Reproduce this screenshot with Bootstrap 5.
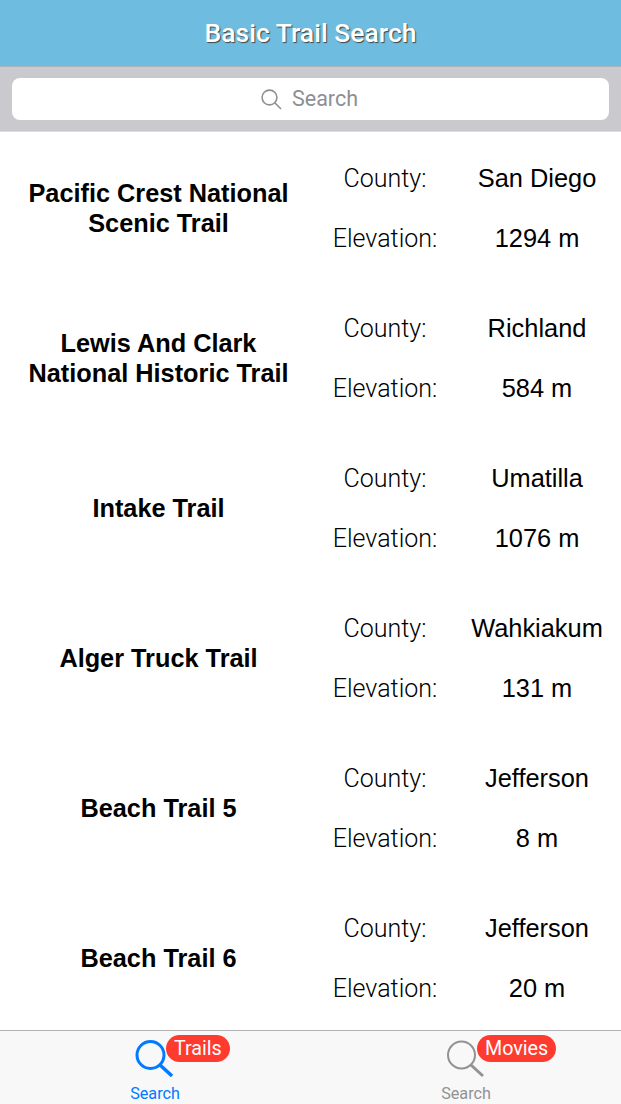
<!DOCTYPE html>
<html lang="en">
<head>
  <meta charset="UTF-8">
  <meta name="viewport" content="width=device-width, initial-scale=1.0">
  <title>Basic Trail Search</title>
  <link href="https://cdn.jsdelivr.net/npm/bootstrap@5.3.0/dist/css/bootstrap.min.css" rel="stylesheet">
  <style>
    html, body {
      height: 100%;
      background: #fff;
    }
    body {
      font-family: "Liberation Sans", Arial, sans-serif;
      color: #000;
      overflow: hidden;
    }
    .app-screen {
      height: 1104px;
    }
    .title-bar {
      height: 67px;
      background: #6ebde0;
      border-bottom: 1px solid #a9b4ba;
      color: #fff;
      font-family: Roboto, sans-serif;
      font-weight: 500;
      font-size: 26.5px;
      text-shadow: 1px 1px 1px #444;
    }
    .search-wrap {
      height: 64px;
      background: #c9c9ce;
      padding: 11px 12px;
    }
    .search-box {
      height: 42px;
      padding-right: 2px;
      background: #fff;
      border-radius: 8px;
      color: #8e8e93;
      font-family: Roboto, sans-serif;
      font-size: 21.5px;
      line-height: 40px;
    }
    .search-label {
      margin-left: 2px;
    }
    .trail-list {
      min-height: 0;
      padding-top: 1px;
      border-top: 1px solid #dcdce0;
    }
    .trail-row {
      height: 150px;
      flex-shrink: 0;
    }
    .trail-name {
      width: 317px;
      font-size: 25.3px;
      font-weight: 700;
      line-height: 30px;
    }
    .trail-facts {
      width: 304px;
      font-size: 25.4px;
      line-height: 30px;
      gap: 30px;
    }
    .fact-label {
      width: 136px;
      height: 30px;
      font-family: Roboto, sans-serif;
      font-weight: 300;
      font-size: 25px;
      line-height: 32px;
    }
    .fact-value {
      width: 168px;
    }
    .tab-bar {
      height: 74px;
      flex-shrink: 0;
      background: #f8f8f8;
      border-top: 1px solid #b2b2b2;
    }
    .tab-item {
      width: 310px;
      height: 73px;
      font-family: Roboto, sans-serif;
      font-size: 16.2px;
      color: #929292;
    }
    .tab-item.is-active {
      color: #007aff;
    }
    .tab-icon {
      position: absolute;
      left: 135px;
      top: 9px;
    }
    .tab-text {
      position: absolute;
      left: 0;
      right: 0;
      top: 54px;
      line-height: 18px;
    }
    .tab-pill {
      position: absolute;
      left: 166px;
      top: 4px;
      height: 27px;
      line-height: 27px;
      padding: 0 8px;
      border-radius: 14px;
      background: #ff3b30;
      color: #fff;
      font-size: 19.7px;
    }
  </style>
</head>
<body>
<div class="app-screen d-flex flex-column">
  <header class="title-bar d-flex align-items-center justify-content-center flex-shrink-0">Basic Trail Search</header>
  <div class="search-wrap flex-shrink-0">
    <div class="search-box d-flex align-items-center justify-content-center gap-2">
      <svg width="21" height="21" viewBox="0 0 21 21" fill="none" stroke="#8e8e93" stroke-width="1.6">
        <circle cx="8.5" cy="8.5" r="7.4"/>
        <path d="M13.8 13.8 L20 20"/>
      </svg>
      <span class="search-label">Search</span>
    </div>
  </div>

  <main class="trail-list flex-grow-1 overflow-hidden d-flex flex-column" id="trails"></main>

  <nav class="tab-bar d-flex">
    <div class="tab-item is-active position-relative text-center">
      <svg class="tab-icon" width="38" height="38" viewBox="0 0 38 38" fill="none" stroke="#007aff" stroke-width="3">
        <circle cx="15.500" cy="15" r="13.500"/>
        <path d="M25 25 L37 36" stroke-width="3.500"/>
      </svg>
      <span class="tab-text">Search</span>
      <span class="tab-pill">Trails</span>
    </div>
    <div class="tab-item position-relative text-center ms-auto">
      <svg class="tab-icon" width="38" height="38" viewBox="0 0 38 38" fill="none" stroke="#929292" stroke-width="2">
        <circle cx="15.500" cy="15" r="13.500"/>
        <path d="M25 25 L37 36" stroke-width="3"/>
      </svg>
      <span class="tab-text">Search</span>
      <span class="tab-pill">Movies</span>
    </div>
  </nav>
</div>

<script>
  const trails = [
    ['Pacific Crest National<br>Scenic Trail', 'San Diego', '1294 m'],
    ['Lewis And Clark<br>National Historic Trail', 'Richland', '584 m'],
    ['Intake Trail', 'Umatilla', '1076 m'],
    ['Alger Truck Trail', 'Wahkiakum', '131 m'],
    ['Beach Trail 5', 'Jefferson', '8 m'],
    ['Beach Trail 6', 'Jefferson', '20 m']
  ];

  document.getElementById('trails').innerHTML = trails.map(t => `
    <div class="trail-row d-flex align-items-center">
      <div class="trail-name text-center">${t[0]}</div>
      <div class="trail-facts d-flex flex-column">
        <div class="d-flex text-center"><div class="fact-label">County:</div><div class="fact-value">${t[1]}</div></div>
        <div class="d-flex text-center"><div class="fact-label">Elevation:</div><div class="fact-value">${t[2]}</div></div>
      </div>
    </div>`).join('');
</script>
<script src="https://cdn.jsdelivr.net/npm/bootstrap@5.3.0/dist/js/bootstrap.bundle.min.js"></script>
</body>
</html>
